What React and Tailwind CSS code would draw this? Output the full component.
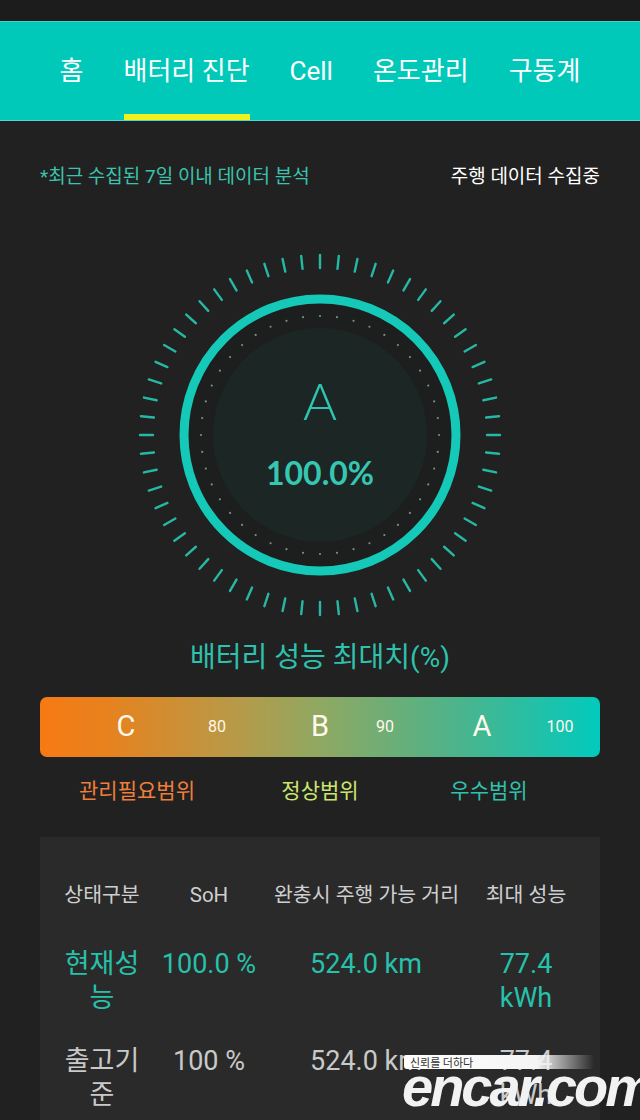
import React from "react";

const TEAL = "#2fc4b0";

const NAV = ["홈", "배터리 진단", "Cell", "온도관리", "구동계"];

const Gauge = () => {
  const ticks = Array.from({ length: 60 }, (_, i) => {
    const a = (i / 60) * Math.PI * 2;
    const s = Math.sin(a);
    const c = Math.cos(a);
    return (
      <line
        key={i}
        x1={200 + 167 * s}
        y1={200 - 167 * c}
        x2={200 + 180 * s}
        y2={200 - 180 * c}
        stroke="#27b8a5"
        strokeWidth="2.4"
        strokeLinecap="round"
      />
    );
  });
  const dots = Array.from({ length: 44 }, (_, i) => {
    const a = (i / 44) * Math.PI * 2;
    return <circle key={i} cx={200 + 119 * Math.sin(a)} cy={200 - 119 * Math.cos(a)} r="1.1" fill="#7d8b89" />;
  });
  return (
    <svg width="400" height="400" viewBox="0 0 400 400">
      {ticks}
      <circle cx="200" cy="200" r="131" fill="#1d1e1e" />
      <circle cx="200" cy="200" r="107" fill="#1c2624" />
      {dots}
      <circle cx="200" cy="200" r="136" fill="none" stroke="#14c9b7" strokeWidth="9" />
      <text x="200" y="185" textAnchor="middle" fill={TEAL} fontSize="52" fontWeight="300" fontFamily="Lato, 'Open Sans', sans-serif">
        A
      </text>
      <text x="200" y="250" textAnchor="middle" fill="#36c6b2" fontSize="32" fontWeight="700" fontFamily="Lato, Inter, sans-serif">
        100.0%
      </text>
    </svg>
  );
};

export default function App() {
  return (
    <div className="relative min-h-[1120px] overflow-hidden bg-[#212121] font-['Roboto','Noto_Sans_CJK_KR',sans-serif]">
      {/* Status bar */}
      <div className="h-[21px] bg-[#1c1c1c]" />

      {/* Tabs */}
      <div className="h-[100px] bg-[#01c9b9] border-t border-[#3fd6c8] border-b border-b-[#52d8cc] flex justify-center gap-[40px]">
        {NAV.map((n, i) => (
          <div key={n} className="relative flex items-center">
            <span className="text-[26px] text-white">{n}</span>
            {i === 1 && <div className="absolute bottom-0 left-0 right-0 h-[6px] bg-[#eef21e]" />}
          </div>
        ))}
      </div>

      {/* Info line */}
      <div className="flex justify-between px-[40px] pt-[42px]">
        <span className="text-[19px] text-[#3bc3ad]">*최근 수집된 7일 이내 데이터 분석</span>
        <span className="text-[19px] text-white">주행 데이터 수집중</span>
      </div>

      {/* Gauge */}
      <div className="flex justify-center mt-[43px]">
        <Gauge />
      </div>

      <div className="text-center text-[28px] leading-[42px] text-[#2ec1ad] mt-[2px]">배터리 성능 최대치(%)</div>

      {/* Grade bar */}
      <div className="relative mx-[40px] mt-[18px] h-[60px] rounded-[7px] bg-[linear-gradient(90deg,#f77a14_0%,#e7821e_12%,#b79a48_35%,#8fa862_50%,#4bb48c_75%,#02cabd_100%)] text-[#fff8ec]">
        <span className="absolute left-[86px] top-1/2 -translate-x-1/2 -translate-y-1/2 text-[29px]">C</span>
        <span className="absolute left-[177px] top-1/2 -translate-x-1/2 -translate-y-1/2 text-[16px]">80</span>
        <span className="absolute left-[280px] top-1/2 -translate-x-1/2 -translate-y-1/2 text-[29px]">B</span>
        <span className="absolute left-[345px] top-1/2 -translate-x-1/2 -translate-y-1/2 text-[16px]">90</span>
        <span className="absolute left-[442px] top-1/2 -translate-x-1/2 -translate-y-1/2 text-[29px]">A</span>
        <span className="absolute left-[520px] top-1/2 -translate-x-1/2 -translate-y-1/2 text-[16px]">100</span>
      </div>

      <div className="flex mx-[40px] mt-[19px] text-[21px] leading-[31px]">
        <div className="w-[194px] text-center text-[#ee7f3a]">관리필요범위</div>
        <div className="w-[172px] text-center text-[#cbe66e]">정상범위</div>
        <div className="w-[166px] text-center text-[#2ec1ad]">우수범위</div>
      </div>

      {/* Table */}
      <div className="mx-[40px] mt-[30px] bg-[#2a2a2a] pt-[43px] pb-[40px] px-[20px]">
        <div className="grid grid-cols-[84px_130px_184px_122px] text-[20.5px] leading-[30px] text-[#cfcfcf] text-center">
          <div className="whitespace-nowrap">상태구분</div>
          <div>SoH</div>
          <div className="whitespace-nowrap">완충시 주행 가능 거리</div>
          <div className="w-[90px] ml-[23px] flex justify-center whitespace-nowrap">최대 성능</div>
        </div>
        <div className="grid grid-cols-[84px_130px_184px_122px] text-[27px] leading-[34px] text-[#27c1ab] text-center mt-[37px]">
          <div>현재성능</div>
          <div>100.0 %</div>
          <div>524.0 km</div>
          <div className="w-[90px] ml-[23px]">77.4 kWh</div>
        </div>
        <div className="grid grid-cols-[84px_130px_184px_122px] text-[27px] leading-[34px] text-[#c9c9c9] text-center mt-[29px]">
          <div>출고기준</div>
          <div>100 %</div>
          <div>524.0 km</div>
          <div className="w-[90px] ml-[23px]">77.4 kWh</div>
        </div>
      </div>

      {/* Watermark */}
      <div className="absolute left-[404px] top-[1055px] w-[190px] h-[14px] rounded-l-[3px] bg-[linear-gradient(90deg,#ffffff_0%,#f4f4f4_70%,rgba(255,255,255,0)_100%)] flex items-center pl-[6px]">
        <span className="text-[11px] leading-[14px] text-[#333] font-['Noto_Sans_CJK_KR',sans-serif]">신뢰를 더하다</span>
      </div>
      <div className="absolute left-[402px] top-[1057px] text-[56px] leading-[60px] font-bold italic text-[#f2f2f2] tracking-[-3px] font-['Liberation_Sans',sans-serif]">
        encar.com
      </div>
    </div>
  );
}
